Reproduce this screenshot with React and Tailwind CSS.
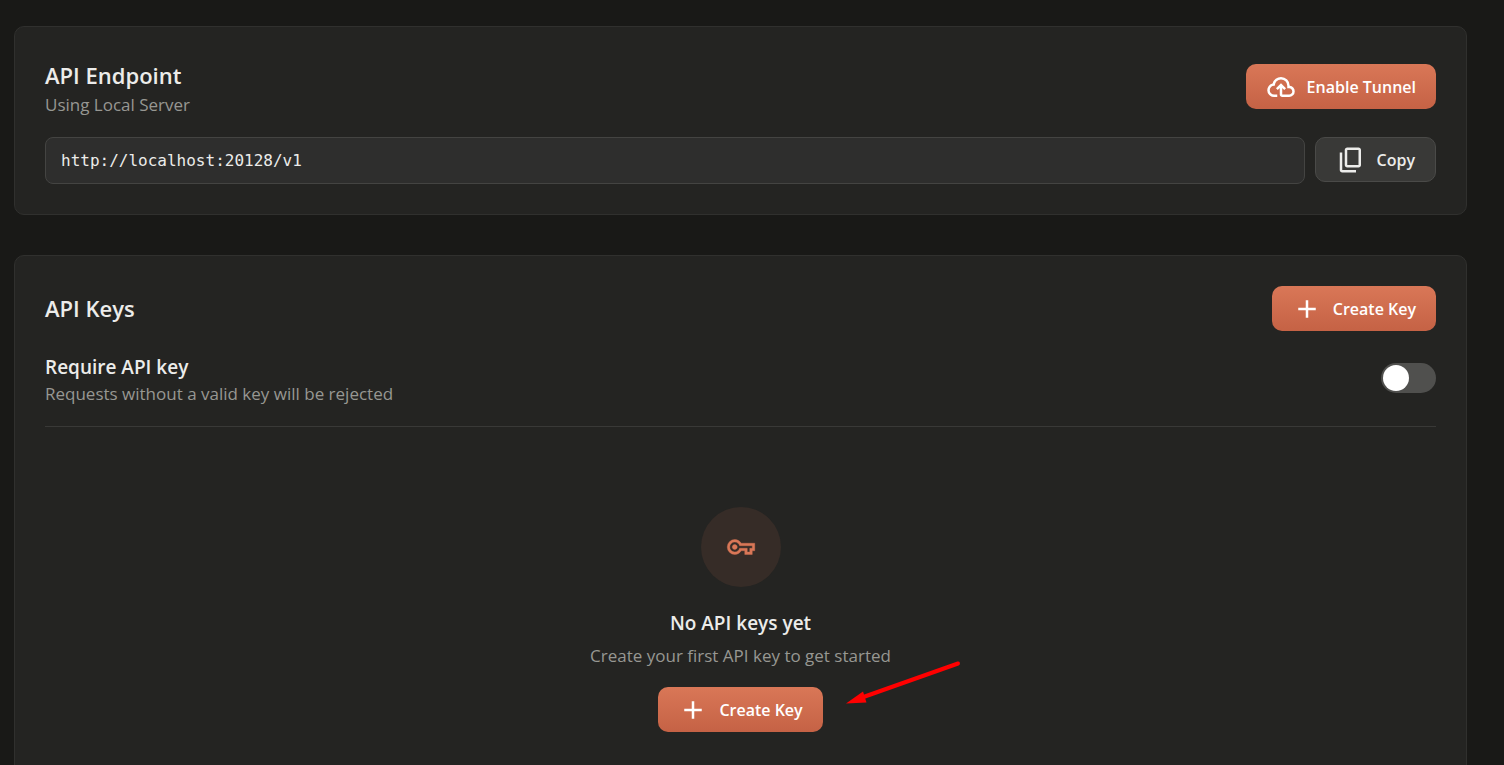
import React, { useState } from 'react';

const ICONS = {
  cloudUpload:
    'M260-160q-91 0-155.5-63T40-377q0-78 47-139t123-78q25-92 100-149t170-57q117 0 198.5 81.5T760-520q69 8 114.5 59.5T920-340q0 75-52.5 127.5T740-160H520q-33 0-56.5-23.5T440-240v-206l-64 62-56-56 160-160 160 160-56 56-64-62v206h220q42 0 71-29t29-71q0-42-29-71t-71-29h-60v-80q0-83-58.5-141.5T480-720q-83 0-141.5 58.5T280-520h-20q-58 0-99 41t-41 99q0 58 41 99t99 41h100v80H260Z',
  copy: 'M360-240q-33 0-56.5-23.5T280-320v-480q0-33 23.5-56.5T360-880h360q33 0 56.5 23.5T800-800v480q0 33-23.5 56.5T720-240H360Zm0-80h360v-480H360v480ZM200-80q-33 0-56.5-23.5T120-160v-560h80v560h440v80H200Z',
  add: 'M440-440H200v-80h240v-240h80v240h240v80H520v240h-80v-240Z',
  key: 'M280-240q-100 0-170-70T40-480q0-100 70-170t170-70q66 0 121 33t87 87h432v240h-80v120H600v-120H488q-32 54-87 87t-121 33Zm0-80q66 0 106-40.5t48-79.5h246v120h80v-120h80v-80H434q-8-39-48-79.5T280-640q-66 0-113 47t-47 113q0 66 47 113t113 47Zm0-80q33 0 56.5-23.5T360-480q0-33-23.5-56.5T280-560q-33 0-56.5 23.5T200-480q0 33 23.5 56.5T280-400Z',
};

function Icon({ name, className = '' }) {
  return (
    <svg viewBox="0 -960 960 960" fill="currentColor" aria-hidden="true" className={`w-[30px] h-[30px] shrink-0 ${className}`}>
      <path d={ICONS[name]} />
    </svg>
  );
}

function Button({ icon, variant = 'primary', children }) {
  const styles =
    variant === 'primary'
      ? 'bg-linear-to-b from-[#d97757] to-[#c56245] text-white'
      : 'bg-[#393937] border border-[#4a4a48] text-[#ececea]';
  return (
    <button type="button" className={`inline-flex items-center justify-center gap-[11px] h-[45px] px-5 rounded-[10px] text-base font-semibold whitespace-nowrap cursor-pointer ${styles}`}>
      <Icon name={icon} />
      {children}
    </button>
  );
}

function Card({ children }) {
  return <section className="bg-[#242422] border border-[#30302e] rounded-[10px] p-[30px]">{children}</section>;
}

export default function App() {
  const [requireKey, setRequireKey] = useState(false);

  return (
    <main className="h-screen overflow-y-auto [scrollbar-width:none] bg-[#191917] text-[#ececea] font-['Open_Sans','Noto_Sans',sans-serif]">
      <div className="flex flex-col gap-10 pt-[26px] pb-10 pl-3.5 pr-[37px]">
        {/* Endpoint */}
        <Card>
          <div className="flex items-center justify-between mb-[21px]">
            <div>
              <h2 className="text-[22px] leading-[37px] font-semibold">API Endpoint</h2>
              <p className="text-[17px] leading-[22px] text-[#979792]">Using Local Server</p>
            </div>
            <Button icon="cloudUpload">Enable Tunnel</Button>
          </div>
          <div className="flex items-start gap-2.5">
            <input
              type="text"
              readOnly
              aria-label="API endpoint URL"
              value="http://localhost:20128/v1"
              className="flex-1 min-w-0 h-[47px] px-[15px] rounded-lg bg-[#2e2e2d] border border-[#444442] text-base font-['DejaVu_Sans_Mono',monospace] outline-none"
            />
            <Button icon="copy" variant="secondary">Copy</Button>
          </div>
        </Card>

        {/* Keys */}
        <Card>
          <div className="flex items-center justify-between mb-5">
            <h2 className="text-[22px] leading-[37px] font-semibold">API Keys</h2>
            <Button icon="add">Create Key</Button>
          </div>

          <div className="flex items-center justify-between pb-[21px] mb-5 border-b border-[#393937]">
            <div>
              <label htmlFor="require-key" className="block text-[19px] leading-8 font-semibold">Require API key</label>
              <p className="text-[17px] leading-[22px] text-[#979792]">Requests without a valid key will be rejected</p>
            </div>
            <input
              id="require-key"
              type="checkbox"
              role="switch"
              checked={requireKey}
              onChange={(e) => setRequireKey(e.target.checked)}
              className="appearance-none flex items-center w-[55px] h-[30px] px-0.5 rounded-full bg-[#50504e] cursor-pointer before:w-[26px] before:h-[26px] before:rounded-full before:bg-white checked:bg-[#d97757] checked:justify-end"
            />
          </div>

          {/* Empty state */}
          <div className="flex flex-col items-center py-[60px] text-center">
            <div className="flex items-center justify-center w-20 h-20 mb-5 rounded-full bg-[#362c27] text-[#d97757]">
              <Icon name="key" className="stroke-current stroke-[12]" />
            </div>
            <p className="text-[19px] leading-8 font-semibold mb-1.5">No API keys yet</p>
            <p className="text-[17px] leading-[22px] text-[#979792] mb-5">Create your first API key to get started</p>
            <div className="relative">
              <Button icon="add">Create Key</Button>
              <svg viewBox="0 0 118 50" fill="none" aria-hidden="true" className="absolute left-1/2 -top-7 ml-[105px] w-[118px] h-[50px]">
                <path d="M112 4.500L16 38.500" stroke="#f00" strokeWidth="4" strokeLinecap="round" />
                <path d="M0 44.500L17 32.500L20.500 43.500Z" fill="#f00" />
              </svg>
            </div>
          </div>
        </Card>
      </div>
    </main>
  );
}
